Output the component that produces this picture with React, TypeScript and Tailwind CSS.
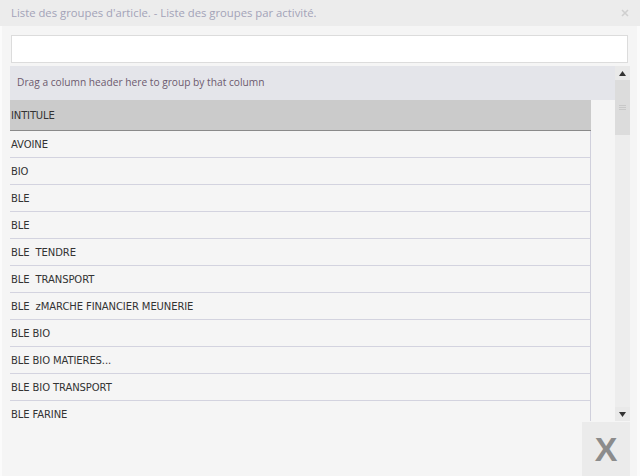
import React from "react";

const rows = [
  "AVOINE",
  "BIO",
  "BLE",
  "BLE",
  "BLE  TENDRE",
  "BLE  TRANSPORT",
  "BLE  zMARCHE FINANCIER MEUNERIE",
  "BLE BIO",
  "BLE BIO MATIERES...",
  "BLE BIO TRANSPORT",
  "BLE FARINE",
];

export default function App() {
  return (
    <div className="w-[640px] h-[476px] bg-[#fbfbfb] flex flex-col overflow-hidden" style={{ fontFamily: '"Open Sans", "Noto Sans", sans-serif' }}>
      <div className="h-[26px] bg-[#ececec] flex items-center justify-between pl-[11px] pr-[10px] shrink-0">
        <span className="text-[11.3px] text-[#a3a3b8] leading-none">Liste des groupes d'article. - Liste des groupes par activité.</span>
        <svg width="8" height="8" viewBox="0 0 8 8" className="mr-[1px]">
          <path d="M1 1L7 7M7 1L1 7" stroke="#cfcfcf" strokeWidth="1.6" />
        </svg>
      </div>
      <div className="flex-1 ml-[2px] mr-[3px] bg-[#f5f5f5] flex flex-col pt-[9px]">
        <div className="mx-[9px] h-[28px] bg-white border border-[#dcdcdc] shrink-0" />
        <div className="ml-[8px] mr-[7px] mt-[3px] h-[355px] flex shrink-0">
          <div className="w-[605px] flex flex-col">
            <div className="h-[34px] bg-[#e4e5ea] flex items-center pl-[7px] shrink-0">
              <span className="text-[10.2px] text-[#6c5a6e]">Drag a column header here to group by that column</span>
            </div>
            <div className="w-[581px] flex-1 overflow-hidden flex flex-col" style={{ fontFamily: '"DejaVu Sans", sans-serif' }}>
              <div className="h-[31px] bg-[#cbcbcb] border-b border-[#8a8a8a] flex items-center pl-[1px] shrink-0">
                <span className="text-[10px] text-[#333] tracking-[-0.15px]">INTITULE</span>
              </div>
              <div className="flex-1 overflow-hidden border-r border-[#d0d0dc]">
                {rows.map((r, i) => (
                  <div key={i} className="h-[27px] border-b border-[#d3d3df] flex items-center pl-[1px]">
                    <span className="text-[10px] text-[#333] tracking-[-0.1px] whitespace-pre">{r}</span>
                  </div>
                ))}
              </div>
            </div>
          </div>
          <div className="w-[15px] flex flex-col">
            <div className="h-[14px] bg-[#e9e9e9] flex items-center justify-center shrink-0">
              <svg width="7" height="5" viewBox="0 0 7 5"><path d="M3.5 0L7 5H0Z" fill="#333" /></svg>
            </div>
            <div className="h-[55px] bg-[#dcdcdc] flex items-center justify-center shrink-0">
              <svg width="7" height="5" viewBox="0 0 7 5"><path d="M0 0.5H7M0 2.5H7M0 4.5H7" stroke="#c8c8c8" strokeWidth="1" /></svg>
            </div>
            <div className="flex-1 bg-[#ededed]" />
            <div className="h-[14px] bg-[#e9e9e9] flex items-center justify-center shrink-0">
              <svg width="7" height="5" viewBox="0 0 7 5"><path d="M0 0H7L3.5 5Z" fill="#333" /></svg>
            </div>
          </div>
        </div>
        <div className="flex justify-end mr-[7px] mt-[1px] flex-1">
          <div className="w-[48px] bg-[#ebebeb] flex items-center justify-center">
            <span className="text-[34px] font-bold text-[#8c8c8c] leading-none" style={{ fontFamily: '"Liberation Sans", sans-serif' }}>X</span>
          </div>
        </div>
      </div>
    </div>
  );
}
